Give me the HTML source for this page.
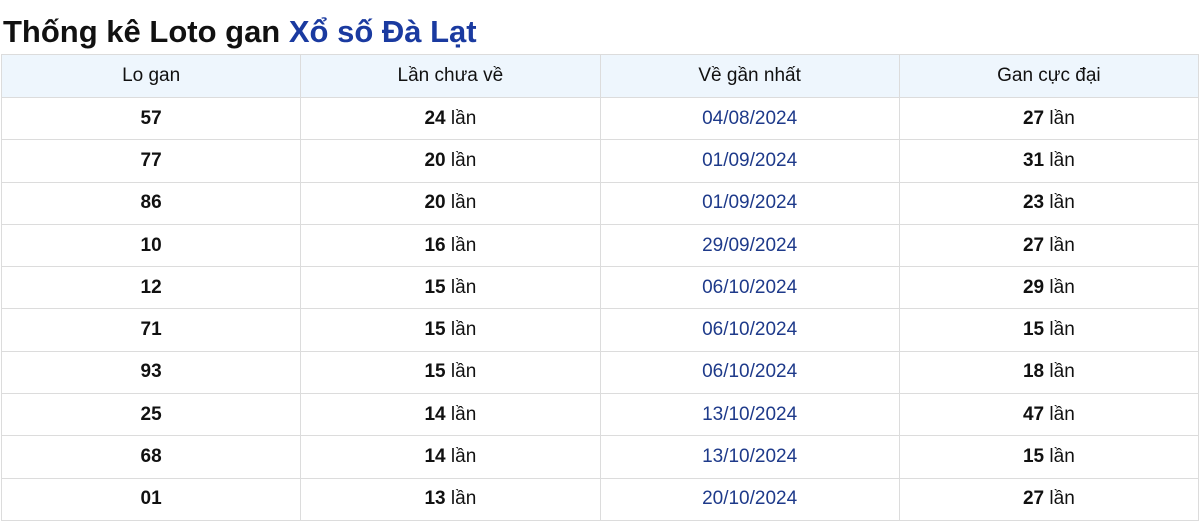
<!DOCTYPE html>
<html><head><meta charset="utf-8"><style>
body{margin:0;background:#fff;font-family:"Liberation Sans",Arial,sans-serif;width:1200px;height:520px;overflow:hidden}
h1{margin:0;position:absolute;left:3px;top:13px;font-size:31px;font-weight:bold;color:#111;line-height:38px;white-space:nowrap}
h1 span{color:#1a3aa0}
table{position:absolute;left:1px;top:54px;width:1198px;border-collapse:collapse;table-layout:fixed}
td,th{border:1px solid #dcdcdc;text-align:center;font-size:19px;color:#111;padding:0;height:41.3px}
th{background:#eef6fd;font-weight:normal;height:42px}
td b{font-weight:bold}
td.d{color:#1e3a8a}
</style></head><body>
<h1>Thống kê Loto gan <span>Xổ số Đà Lạt</span></h1>
<table>
<tr><th>Lo gan</th><th>Lần chưa về</th><th>Về gần nhất</th><th>Gan cực đại</th></tr>
<tr><td><b>57</b></td><td><b>24</b> lần</td><td class="d">04/08/2024</td><td><b>27</b> lần</td></tr>
<tr><td><b>77</b></td><td><b>20</b> lần</td><td class="d">01/09/2024</td><td><b>31</b> lần</td></tr>
<tr><td><b>86</b></td><td><b>20</b> lần</td><td class="d">01/09/2024</td><td><b>23</b> lần</td></tr>
<tr><td><b>10</b></td><td><b>16</b> lần</td><td class="d">29/09/2024</td><td><b>27</b> lần</td></tr>
<tr><td><b>12</b></td><td><b>15</b> lần</td><td class="d">06/10/2024</td><td><b>29</b> lần</td></tr>
<tr><td><b>71</b></td><td><b>15</b> lần</td><td class="d">06/10/2024</td><td><b>15</b> lần</td></tr>
<tr><td><b>93</b></td><td><b>15</b> lần</td><td class="d">06/10/2024</td><td><b>18</b> lần</td></tr>
<tr><td><b>25</b></td><td><b>14</b> lần</td><td class="d">13/10/2024</td><td><b>47</b> lần</td></tr>
<tr><td><b>68</b></td><td><b>14</b> lần</td><td class="d">13/10/2024</td><td><b>15</b> lần</td></tr>
<tr><td><b>01</b></td><td><b>13</b> lần</td><td class="d">20/10/2024</td><td><b>27</b> lần</td></tr>
</table>
</body></html>
